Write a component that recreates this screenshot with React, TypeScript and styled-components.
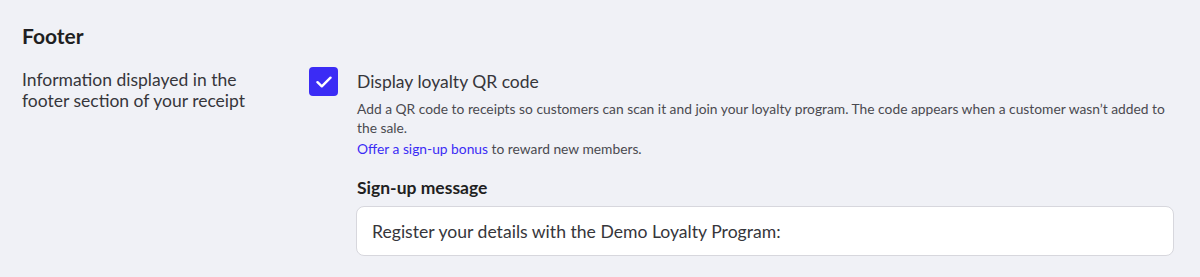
import React from "react";
import styled, { createGlobalStyle } from "styled-components";

const Global = createGlobalStyle`
  html, body { margin: 0; padding: 0; background: #f0f1f6; }
  body { font-family: Lato, "Noto Sans", sans-serif; -webkit-font-smoothing: antialiased; }
  * { box-sizing: border-box; }
`;

const Page = styled.div`
  width: 1200px;
  height: 277px;
  background: #f0f1f6;
  padding: 23px 26px 0 22px;
  color: #2b2b2f;
`;

const Heading = styled.h2`
  margin: 0 0 18px;
  font-size: 21px;
  line-height: 26px;
  font-weight: 700;
  color: #1f1f22;
`;

const Row = styled.div`
  display: grid;
  grid-template-columns: 287px 1fr;
`;

const SideText = styled.p`
  margin: 0;
  padding-top: 2px;
  font-size: 17.5px;
  line-height: 21px;
  color: #36363b;
  width: 250px;
`;

const OptionRow = styled.div`
  display: flex;
  gap: 19px;
  align-items: flex-start;
`;

const Box = styled.div`
  flex: 0 0 29px;
  width: 29px;
  height: 29px;
  border-radius: 4px;
  background: #3b2cf5;
  display: flex;
  align-items: center;
  justify-content: center;
`;

const OptionBody = styled.div`
  flex: 1;
`;

const OptionTitle = styled.div`
  font-size: 17.5px;
  line-height: 22px;
  margin-top: 4px;
  color: #36363b;
`;

const Help = styled.p<{ $gap: number }>`
  margin: ${(p) => p.$gap}px 0 0;
  font-size: 13.8px;
  line-height: 19px;
  color: #4a4a50;
`;

const Link = styled.a`
  color: #3b2cf5;
  text-decoration: none;
`;

const Field = styled.div`
  margin-top: 19px;
  margin-left: -1px;
`;

const Label = styled.label`
  display: block;
  font-size: 17.5px;
  line-height: 22px;
  font-weight: 700;
  color: #1f1f22;
  margin: 0 0 7px 1px;
`;

const Input = styled.input`
  display: block;
  width: 100%;
  height: 50px;
  border: 1px solid #d7d7dd;
  border-radius: 8px;
  background: #fff;
  padding: 0 15px;
  font-family: Lato, "Noto Sans", sans-serif;
  font-size: 17.6px;
  color: #36363b;
  outline: none;
`;

export default function App() {
  return (
    <>
      <Global />
      <Page>
        <Heading>Footer</Heading>
        <Row>
          <SideText>Information displayed in the footer section of your receipt</SideText>
          <OptionRow>
            <Box>
              <svg width="16" height="12" viewBox="0 0 16 12" fill="none">
                <path d="M1.5 6.2 L5.8 10.3 L14.5 1.7" stroke="#fff" strokeWidth="2.4" strokeLinecap="round" strokeLinejoin="round" />
              </svg>
            </Box>
            <OptionBody>
              <OptionTitle>Display loyalty QR code</OptionTitle>
              <Help $gap={6}>
                Add a QR code to receipts so customers can scan it and join your loyalty program. The code appears when a customer wasn’t added to the sale.
              </Help>
              <Help $gap={2}>
                <Link href="#">Offer a sign-up bonus</Link> to reward new members.
              </Help>
              <Field>
                <Label>Sign-up message</Label>
                <Input defaultValue="Register your details with the Demo Loyalty Program:" />
              </Field>
            </OptionBody>
          </OptionRow>
        </Row>
      </Page>
    </>
  );
}
